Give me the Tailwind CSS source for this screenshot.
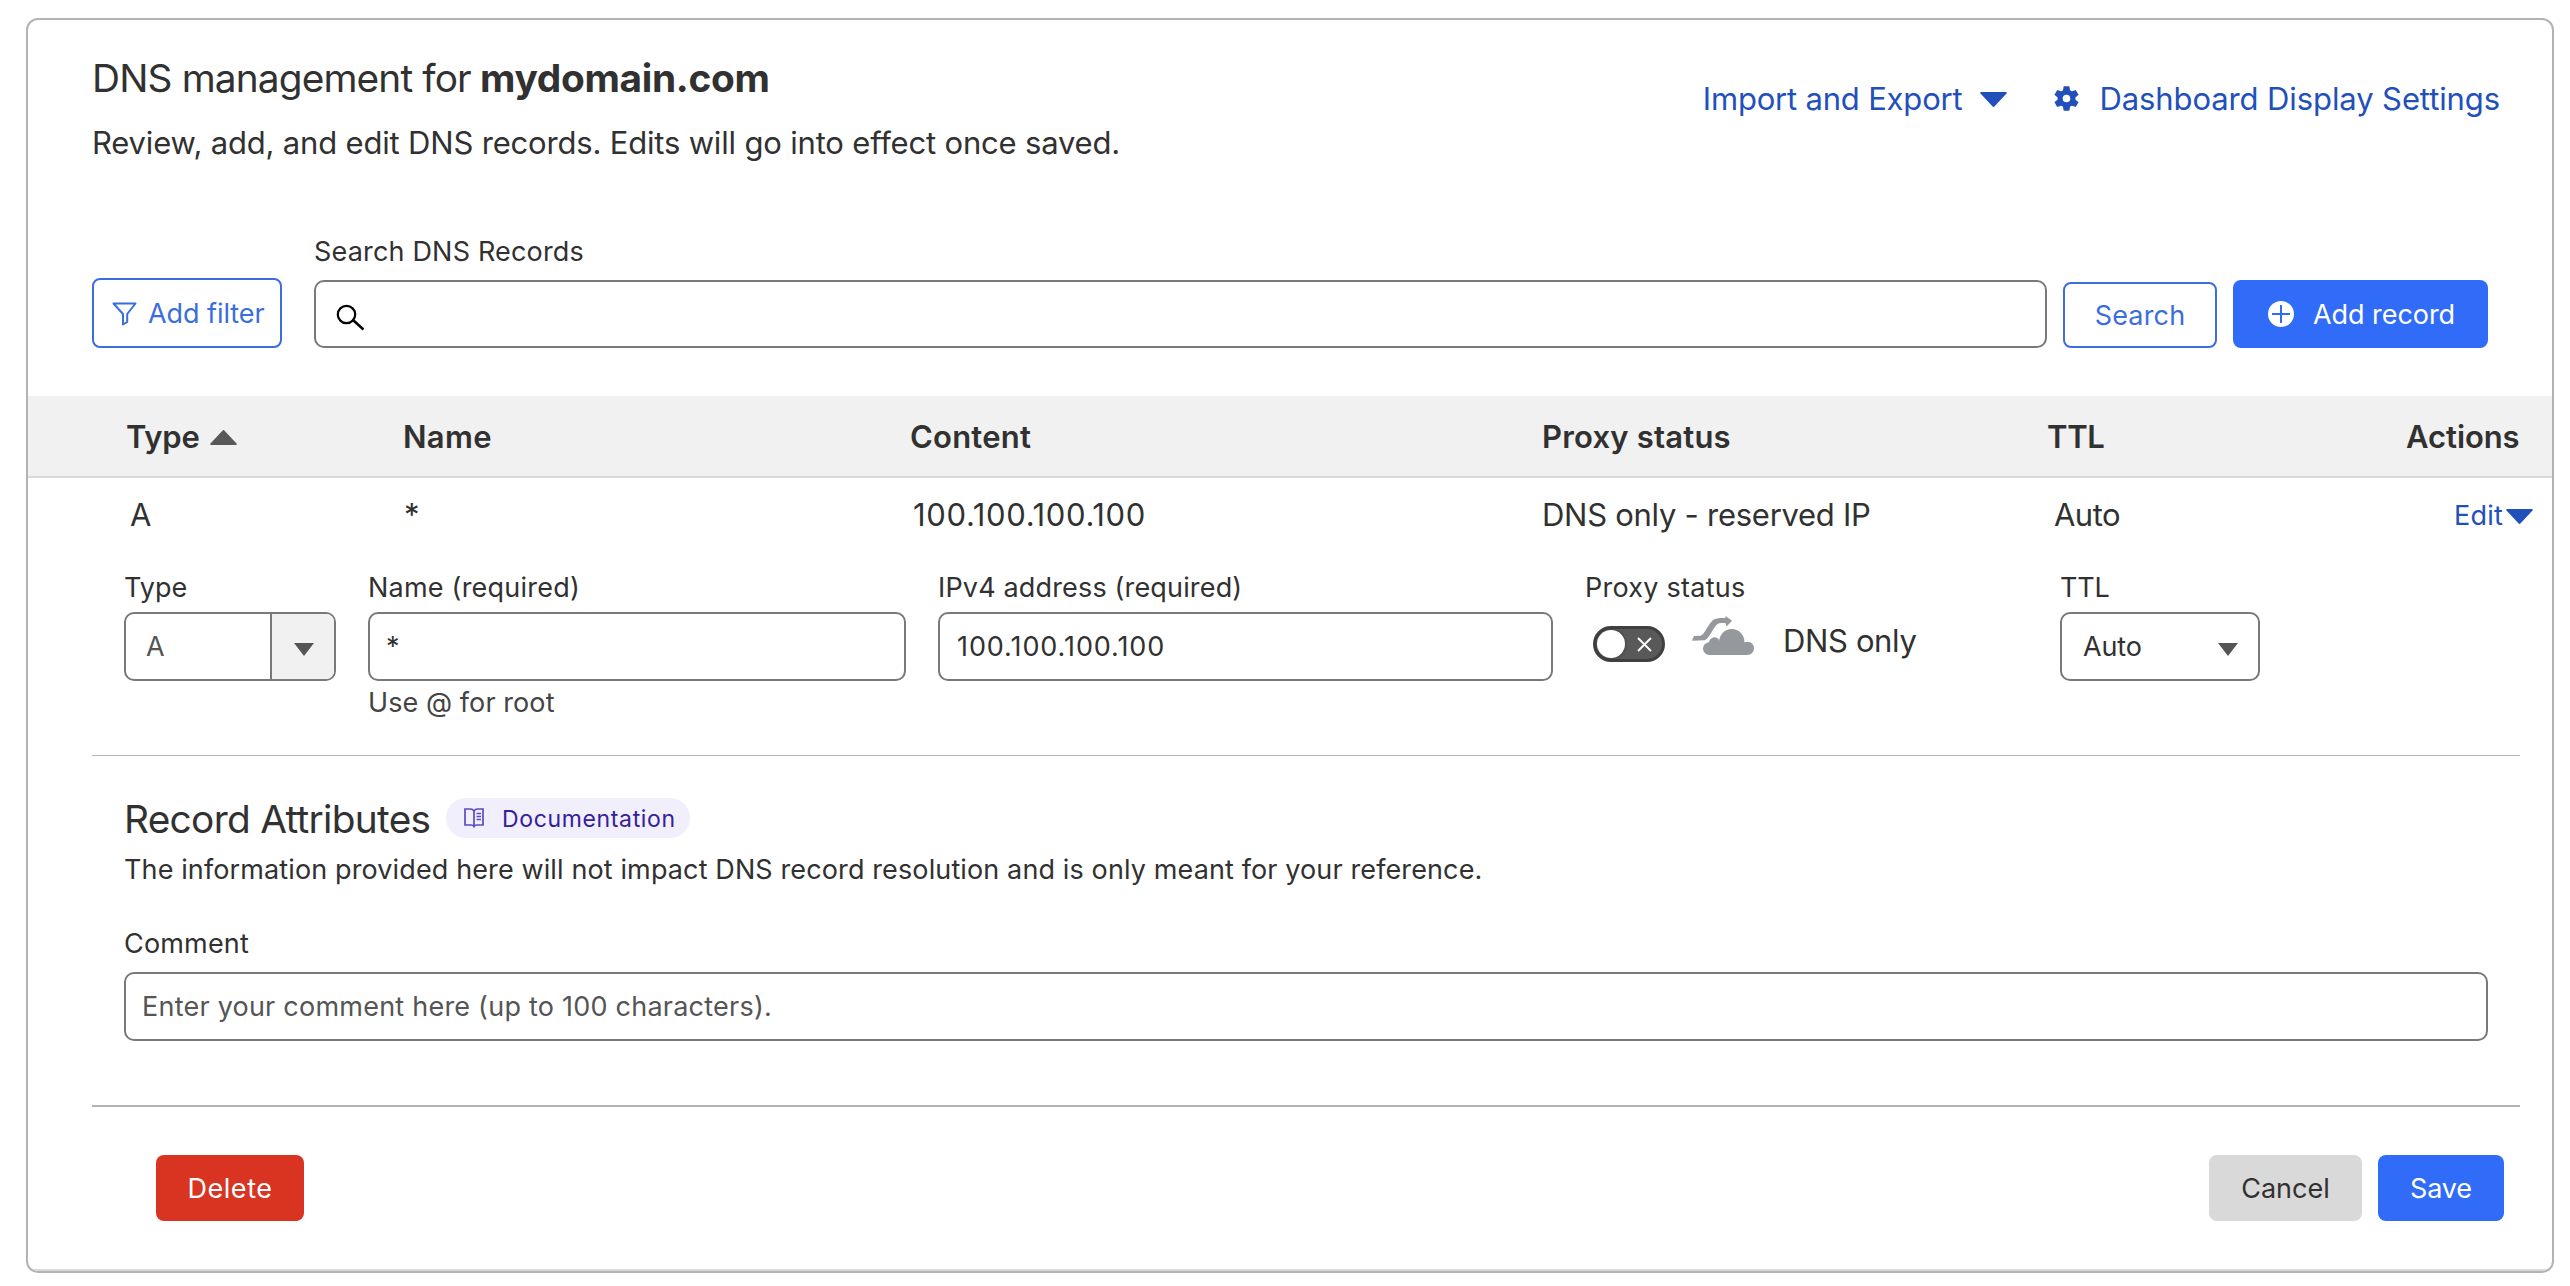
<!DOCTYPE html>
<html lang="en">
<head>
<meta charset="utf-8">
<title>DNS management</title>
<script src="https://cdn.jsdelivr.net/npm/@tailwindcss/browser@4"></script>
</head>
<body class="bg-white font-['Inter',sans-serif] text-[#313131]">
<main class="ml-[26px] mt-[18px] flex h-[1255px] w-[2528px] flex-col overflow-hidden rounded-[12px] border-2 border-[#b3b3b3] bg-white whitespace-nowrap">

  <!-- Title and page links -->
  <header class="flex justify-between pl-[64px] pr-[52px] pt-[34px]">
    <div>
      <h1 class="flex h-12 items-center text-[38.8px] leading-[48px]"><span class="w-[388px] tracking-[-0.85px]">DNS management for</span><strong class="font-bold tracking-[-0.3px]">mydomain.com</strong></h1>
      <p class="mt-[19px] text-[31px] leading-[44px] tracking-[-0.18px]">Review, add, and edit DNS records. Edits will go into effect once saved.</p>
    </div>
    <nav class="mt-[25px] flex h-10 items-center text-[31px] leading-10 text-[#2250bb]">
      <a class="tracking-[-0.19px]">Import and Export</a>
      <svg class="ml-[18px] h-[15px] w-[27px]" viewBox="0 0 27 15" fill="currentColor"><path d="M1.500 0h24a1 1 0 0 1 .8 1.800L14.600 14.300a1.500 1.500 0 0 1-2.200 0L.7 1.800A1 1 0 0 1 1.500 0z"/></svg>
      <svg class="ml-[47px] -mt-[2px] size-[25px]" viewBox="-12.5 -12.5 25 25" fill="currentColor"><path fill-rule="evenodd" d="M0-9a9 9 0 1 0 0 18a9 9 0 0 0 0-18zM0-3.800a3.800 3.800 0 1 1 0 7.600a3.800 3.800 0 0 1 0-7.600z"/><path id="tooth" d="M-2.800-12.300h5.600l1 5.300h-7.600z"/><use href="#tooth" transform="rotate(60)"/><use href="#tooth" transform="rotate(120)"/><use href="#tooth" transform="rotate(180)"/><use href="#tooth" transform="rotate(240)"/><use href="#tooth" transform="rotate(300)"/></svg>
      <a class="ml-[20px] tracking-[-0.1px]">Dashboard Display Settings</a>
    </nav>
  </header>

  <!-- Search toolbar -->
  <section class="mt-[70px] flex items-end pb-12 pl-[64px] text-[27px] leading-8">
    <button class="flex h-[70px] w-[190px] items-center rounded-[8px] border-2 border-[#3b6edc] pl-[18px] text-[#3b6edc]">
      <svg class="size-[25px]" viewBox="0 0 25 25" fill="none" stroke="currentColor" stroke-width="2" stroke-linejoin="round"><path d="M1.500 2.500h22l-8.300 10.500v8l-4.200 2.500v-10.500z"/></svg>
      <span class="ml-[11px] pt-[2px] tracking-[-0.06px]">Add filter</span>
    </button>
    <div class="ml-8 w-[1733px]">
      <label class="block h-8 pt-px tracking-[0.18px]">Search DNS Records</label>
      <div class="mt-[13px] flex h-[68px] items-center rounded-[10px] border-2 border-[#797979] pl-5">
        <svg class="mt-[7px] size-[28px]" viewBox="0 0 28 28" fill="none" stroke="#000" stroke-width="2.200"><circle cx="10.500" cy="10.500" r="8.700"/><path d="M17 16l10.500 9.500" stroke-width="2.600"/></svg>
      </div>
    </div>
    <button class="ml-4 h-[66px] w-[154px] rounded-[8px] border-2 border-[#3b6edc] pt-px tracking-[0.17px] text-[#3b6edc]">Search</button>
    <button class="ml-4 flex h-[68px] w-[255px] items-center rounded-[8px] bg-[#306cf8] pl-[35px] text-white">
      <svg class="size-[26px]" viewBox="0 0 26 26"><circle cx="13" cy="13" r="13" fill="#fff"/><path d="M13 4v18M4 13h18" stroke="#306cf8" stroke-width="2"/></svg>
      <span class="ml-[19px] pt-px tracking-[-0.06px]">Add record</span>
    </button>
  </section>

  <!-- Table header -->
  <div class="flex h-[82px] items-center border-b-2 border-[#d9d9d9] bg-[#f1f1f1] pl-[98px] pt-[2px] text-[31px] leading-10 font-semibold">
    <div class="flex w-[277px] items-center">
      <span class="tracking-[-0.24px]">Type</span>
      <svg class="ml-[11px] h-[15px] w-[27px]" viewBox="0 0 27 15" fill="#595959"><path d="M1.500 15h24a1 1 0 0 0 .8-1.800L14.600.7a1.500 1.500 0 0 0-2.200 0L.7 13.200A1 1 0 0 0 1.500 15z"/></svg>
    </div>
    <div class="w-[507px] tracking-[0.3px]">Name</div>
    <div class="w-[632px] tracking-[0.23px]">Content</div>
    <div class="w-[505px] tracking-[0.2px]">Proxy status</div>
    <div class="w-[359px] tracking-[-0.3px]">TTL</div>
    <div class="tracking-[-0.07px]">Actions</div>
  </div>

  <!-- Record row -->
  <div class="flex h-[73px] items-center pl-[102px] text-[31px] leading-10">
    <div class="w-[274px]">A</div>
    <div class="w-[509px]">*</div>
    <div class="w-[629px] tracking-[0.65px]">100.100.100.100</div>
    <div class="w-[512px] tracking-[-0.27px]">DNS only - reserved IP</div>
    <div class="w-[400px] tracking-[-0.52px]">Auto</div>
    <a class="mt-[3px] flex items-center text-[27px] tracking-[0.23px] text-[#2250bb]">Edit
      <svg class="ml-[3px] h-[15px] w-[27px]" viewBox="0 0 27 15" fill="currentColor"><path d="M1.500 0h24a1 1 0 0 1 .8 1.800L14.600 14.300a1.500 1.500 0 0 1-2.200 0L.7 1.800A1 1 0 0 1 1.500 0z"/></svg>
    </a>
  </div>

  <!-- Edit form -->
  <section class="flex h-[204px] pl-24 pt-5 text-[27px] leading-8">
    <div class="w-[212px]">
      <label class="block h-8 pt-px">Type</label>
      <div class="mt-[9px] flex h-[69px] items-center overflow-hidden rounded-[10px] border-2 border-[#797979]">
        <span class="w-[144px] pl-5 pt-px text-[#555]">A</span>
        <span class="flex h-full flex-1 items-center justify-center border-l-2 border-[#797979] bg-[#f1f1f1] pl-px">
          <svg class="mt-[5px] h-[13px] w-[20px]" viewBox="0 0 20 13" fill="#555"><path d="M0 0h20L10 13z"/></svg>
        </span>
      </div>
    </div>
    <div class="ml-8 w-[538px]">
      <label class="block h-8 pt-px tracking-[0.22px]">Name (required)</label>
      <div class="mt-[9px] flex h-[69px] items-center rounded-[10px] border-2 border-[#797979] pl-[16px] pt-px">*</div>
      <p class="mt-[6px] tracking-[0.08px] text-[#444]">Use @ for root</p>
    </div>
    <div class="ml-8 w-[616px]">
      <label class="block h-8 pt-px tracking-[0.16px]">IPv4 address (required)</label>
      <div class="mt-[9px] flex h-[69px] w-[615px] items-center rounded-[10px] border-2 border-[#797979] pl-[17px] pt-px tracking-[0.92px]">100.100.100.100</div>
    </div>
    <div class="ml-[31px] w-[475px]">
      <label class="block h-8 pt-px tracking-[0.25px]">Proxy status</label>
      <div class="mt-[9px] flex items-start pl-[8px]">
        <div class="mt-[14px] flex h-9 w-[72px] items-center rounded-full border-3 border-[#404040] bg-[#595959] pl-[1px]">
          <span class="size-7 rounded-full bg-white shadow-[0_0_3px_#333]"></span>
          <svg class="ml-[12px] size-[15px]" viewBox="0 0 15 15" stroke="#fff" stroke-width="1.900"><path d="M1 1l13 13M14 1L1 14"/></svg>
        </div>
        <svg class="ml-[27px] mt-1 h-[39px] w-[62px]" viewBox="0 0 187 117" fill="#95989d"><path d="M0 74l6-14 20-1c10-1 20-28 32-41 8-10 18-12 32-12h11V0l20 14-17 17-3-10H88c-10 0-14 5-20 13-10 14-18 34-30 39z"/><circle cx="52" cy="98" r="19"/><circle cx="68" cy="81" r="17"/><circle cx="120" cy="77" r="38"/><circle cx="167" cy="97" r="20"/><path d="M52 80h115v37H52z"/></svg>
        <span class="ml-[29px] mt-[9px] text-[31px] leading-10 tracking-[-0.36px]">DNS only</span>
      </div>
    </div>
    <div class="w-[200px]">
      <label class="block h-8 pt-px tracking-[-0.2px]">TTL</label>
      <div class="mt-[9px] flex h-[69px] items-center justify-between rounded-[10px] border-2 border-[#797979] pl-[21px] pr-5">
        <span class="pt-px tracking-[-0.12px]">Auto</span>
        <svg class="mt-[5px] h-[13px] w-[20px]" viewBox="0 0 20 13" fill="#555"><path d="M0 0h20L10 13z"/></svg>
      </div>
    </div>
  </section>

  <!-- Record attributes -->
  <section class="ml-16 mr-8 border-t border-b-2 border-[#b3b3b3] pb-16 pl-8 pr-8 pt-[38px] text-[27px] leading-8">
    <div class="flex h-12 items-center">
      <h2 class="w-[322px] pt-[2px] text-[38.8px] leading-[48px] tracking-[-0.7px]">Record Attributes</h2>
      <a class="flex h-10 w-[244px] items-center rounded-full bg-[#f1effb] pl-[18px] text-[23px] text-[#34209a]">
        <svg class="size-5" viewBox="0 0 20 20" fill="none" stroke="#5b4bc0" stroke-width="1.700"><path d="M10 3C9 1.500 8 1 6.500 1H1v16h6c1.500 0 2.500.4 3 1.500.5-1.100 1.500-1.500 3-1.500h6V1h-5.500C12 1 11 1.500 10 3zM10 3v15M12.500 5.500h4.500M12.500 8.500h4.500M12.500 11.500h4.500"/></svg>
        <span class="ml-[18px] pt-px tracking-[0.65px]">Documentation</span>
      </a>
    </div>
    <p class="mt-[12px] tracking-[0.12px]">The information provided here will not impact DNS record resolution and is only meant for your reference.</p>
    <label class="mt-[42px] block tracking-[0.18px]">Comment</label>
    <div class="mt-[12px] flex h-[69px] items-center rounded-[10px] border-2 border-[#797979] pl-[16px] pt-px tracking-[0.23px] text-[#555]">Enter your comment here (up to 100 characters).</div>
  </section>

  <!-- Form actions -->
  <footer class="flex h-[164px] items-start border-b-2 border-[#d9d9d9] pl-32 pr-12 pt-12 text-[27px] leading-8">
    <button class="h-[66px] w-[148px] rounded-[8px] bg-[#d93421] pt-[2px] tracking-[0.54px] text-white">Delete</button>
    <button class="ml-auto h-[66px] w-[153px] rounded-[8px] bg-[#d9d9d9] pt-[2px]">Cancel</button>
    <button class="ml-4 h-[66px] w-[126px] rounded-[8px] bg-[#306cf8] pt-[2px] tracking-[-0.11px] text-white">Save</button>
  </footer>
</main>
</body>
</html>
